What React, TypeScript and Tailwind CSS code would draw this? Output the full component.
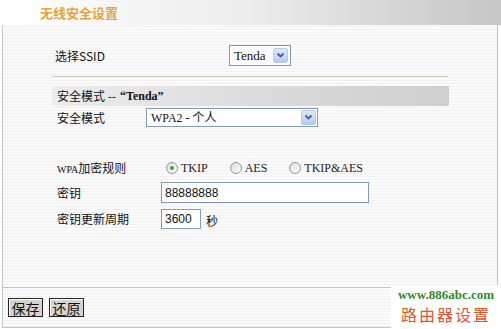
import React from 'react';

const cjk = 'font-["Noto_Sans_CJK_SC",sans-serif]';
const serif = 'font-["Liberation_Serif","Noto_Sans_CJK_SC",serif]';

const Arrow: React.FC = () => (
  <span className="flex h-[15px] w-[15px] items-center justify-center rounded-[2px] border border-[#b8c8ee] bg-gradient-to-b from-[#dfe8fc] to-[#b6c8f2]">
    <svg width="9" height="7" viewBox="0 0 9 7">
      <path d="M1.5 1.5 L4.5 4.5 L7.5 1.5" fill="none" stroke="#4d6185" strokeWidth="1.8" />
    </svg>
  </span>
);

const Radio: React.FC<{ checked?: boolean; label: string }> = ({ checked, label }) => (
  <label className="flex items-center gap-[3px]">
    <span className="flex h-[12px] w-[12px] items-center justify-center rounded-full border border-[#8a98a6] bg-gradient-to-br from-[#dcdcd6] to-white">
      {checked && <span className="h-[4px] w-[4px] rounded-full bg-[#3aa33a]" />}
    </span>
    <span className={`${serif} text-[12px] text-[#222]`}>{label}</span>
  </label>
);

export default function App() {
  return (
    <div className={`relative flex h-[329px] w-[501px] flex-col overflow-hidden bg-white ${cjk} text-[12px] text-[#111]`}>
      <div className="flex h-[25px] shrink-0 items-center bg-gradient-to-r from-white via-[#ececec] to-[#c6c6c6] pl-[40px]">
        <span className="text-[13px] font-bold text-[#e9a23b]">无线安全设置</span>
      </div>

      <div className="ml-[2px] mr-[3px] mb-[1px] flex flex-1 flex-col border-x border-b border-[#c4c4c4] bg-[repeating-linear-gradient(0deg,#f1f1f1_0px,#f1f1f1_1px,#fbfbfb_1px,#fbfbfb_3px)]">
        <div className="flex w-[398px] flex-col pl-[49px] pt-[20px]">
          <div className="flex h-[21px] items-center">
            <span className="w-[177px] pl-[3px]">选择SSID</span>
            <div className="flex h-[21px] w-[62px] items-center justify-between border border-[#7f9db9] bg-white pl-[4px] pr-[2px]">
              <span className={`${serif} text-[13px]`}>Tenda</span>
              <Arrow />
            </div>
          </div>

          <div className="mt-[10px] h-[2px] w-[396px] border-b border-[#f4f4e6] bg-[#c9c9b8]" />

          <div className="mt-[8px] flex h-[20px] w-[397px] items-center bg-gradient-to-r from-[#ededed] via-[#dcdcdc] to-[#cfcfcf] pl-[5px]">
            <span>安全模式 -- </span>
            <span className={`${serif} ml-[4px] text-[12px] font-bold`}>“Tenda”</span>
          </div>

          <div className="mt-[2px] flex h-[19px] items-center">
            <span className="w-[94px] pl-[5px]">安全模式</span>
            <div className="flex h-[19px] w-[172px] items-center justify-between border border-[#7f9db9] bg-white pl-[4px] pr-[1px]">
              <span className={`${serif} text-[12px]`}>WPA2 - 个人</span>
              <Arrow />
            </div>
          </div>

          <div className="mt-[34px] flex h-[14px] items-center">
            <span className="w-[114px] pl-[5px]">
              <span className={`${serif} text-[10px]`}>WPA</span>加密规则
            </span>
            <div className="flex items-center">
              <Radio checked label="TKIP" />
              <div className="ml-[22px]"><Radio label="AES" /></div>
              <div className="ml-[22px]"><Radio label="TKIP&AES" /></div>
            </div>
          </div>

          <div className="mt-[7px] flex h-[21px] items-center">
            <span className="w-[109px] pl-[5px]">密钥</span>
            <div className="flex h-[21px] w-[208px] items-center border border-[#7f9db9] bg-white px-[3px]">
              <span className='font-["Liberation_Sans",sans-serif] text-[12px]'>88888888</span>
            </div>
          </div>

          <div className="mt-[6px] flex h-[20px] items-center">
            <span className="w-[109px] pl-[5px]">密钥更新周期</span>
            <div className="flex h-[20px] w-[40px] items-center border border-[#7f9db9] bg-white px-[3px]">
              <span className='font-["Liberation_Sans",sans-serif] text-[12px]'>3600</span>
            </div>
            <span className="ml-[5px] mt-[4px]">秒</span>
          </div>
        </div>

        <div className="mt-auto border-t border-[#c4c4c4] pb-[10px] pl-[5px] pt-[10px]">
          <div className="flex gap-[6px]">
            <button className="flex h-[19px] w-[35px] items-center justify-center border border-[#222] bg-[#d6d3ce] text-[14px] leading-none shadow-[inset_1px_1px_0_#fff]">保存</button>
            <button className="flex h-[19px] w-[35px] items-center justify-center border border-[#222] bg-[#d6d3ce] text-[14px] leading-none shadow-[inset_1px_1px_0_#fff]">还原</button>
          </div>
        </div>
      </div>

      <div className="absolute bottom-0 right-0 flex h-[44px] w-[110px] flex-col items-center bg-white pt-[2px]">
        <span className='font-["Liberation_Serif",serif] text-[13px] font-bold leading-[15px] text-[#2d8a2d]'>www.886abc.com</span>
        <span className="mt-[3px] text-[16px] leading-[18px] tracking-[2px] text-[#e2552c]">路由器设置</span>
      </div>
    </div>
  );
}
